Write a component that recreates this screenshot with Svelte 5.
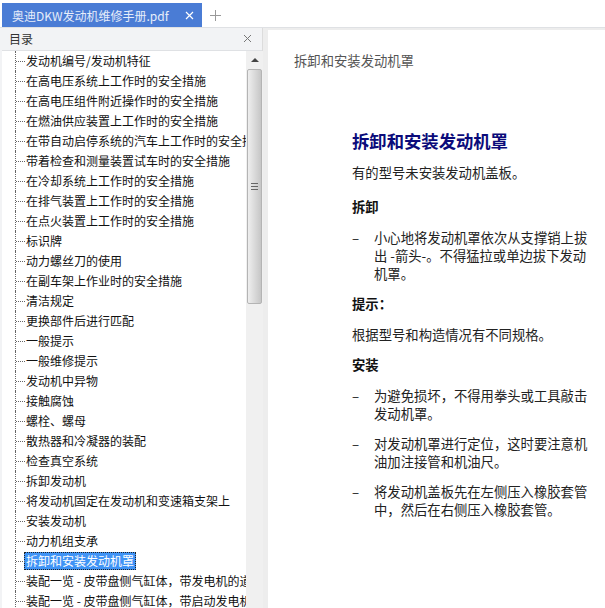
<script>
    const toc = [
        '发动机编号/发动机特征',
        '在高电压系统上工作时的安全措施',
        '在高电压组件附近操作时的安全措施',
        '在燃油供应装置上工作时的安全措施',
        '在带自动启停系统的汽车上工作时的安全措施',
        '带着检查和测量装置试车时的安全措施',
        '在冷却系统上工作时的安全措施',
        '在排气装置上工作时的安全措施',
        '在点火装置上工作时的安全措施',
        '标识牌',
        '动力螺丝刀的使用',
        '在副车架上作业时的安全措施',
        '清洁规定',
        '更换部件后进行匹配',
        '一般提示',
        '一般维修提示',
        '发动机中异物',
        '接触腐蚀',
        '螺栓、螺母',
        '散热器和冷凝器的装配',
        '检查真空系统',
        '拆卸发动机',
        '将发动机固定在发动机和变速箱支架上',
        '安装发动机',
        '动力机组支承',
        '拆卸和安装发动机罩',
        '装配一览 - 皮带盘侧气缸体，带发电机的道路车辆',
        '装配一览 - 皮带盘侧气缸体，带启动发电机'
    ];
    const selected = '拆卸和安装发动机罩';
</script>

<div class="app">
    <div class="tabbar">
        <div class="tab">
            <span class="tab-title">奥迪DKW发动机维修手册.pdf</span>
            <svg width="9" height="9" viewBox="0 0 9 9"><path d="M1 1l7 7M8 1L1 8" stroke="#fff" stroke-width="1.2" /></svg>
        </div>
        <svg class="plus" width="13" height="13" viewBox="0 0 13 13"><path d="M6.5 1v11M1 6.5h11" stroke="#999" stroke-width="1" /></svg>
    </div>
    <div class="main">
        <div class="sidebar">
            <div class="side-head">
                <span>目录</span>
                <svg width="9" height="9" viewBox="0 0 9 9"><path d="M1 1l7 7M8 1L1 8" stroke="#777" stroke-width="1" /></svg>
            </div>
            <div class="side-body">
                <div class="tree">
                    {#each toc as item}
                        <div class="row">
                            <span class="branch"></span>
                            <span class="label" class:sel={item === selected}>{item}</span>
                        </div>
                    {/each}
                </div>
                <div class="scrollbar">
                    <div class="arrow"><span></span></div>
                    <div class="thumb"><span class="grip"></span></div>
                </div>
            </div>
        </div>
        <div class="doc">
            <div class="running">拆卸和安装发动机罩</div>
            <div class="content">
                <h1>拆卸和安装发动机罩</h1>
                <p class="intro">有的型号未安装发动机盖板。</p>
                <h2>拆卸</h2>
                <div class="item first"><span>–</span><p>小心地将发动机罩依次从支撑销上拔出 -箭头-。不得猛拉或单边拔下发动机罩。</p></div>
                <h2 class="hint">提示：</h2>
                <p class="note">根据型号和构造情况有不同规格。</p>
                <h2 class="install">安装</h2>
                <div class="item first"><span>–</span><p>为避免损坏，不得用拳头或工具敲击发动机罩。</p></div>
                <div class="item"><span>–</span><p>对发动机罩进行定位，这时要注意机油加注接管和机油尺。</p></div>
                <div class="item"><span>–</span><p>将发动机盖板先在左侧压入橡胶套管中，然后在右侧压入橡胶套管。</p></div>
            </div>
        </div>
    </div>
</div>

<style>
    :global(body) {
        margin: 0;
        overflow: hidden;
    }

    .app {
        width: 605px;
        height: 608px;
        display: flex;
        flex-direction: column;
        overflow: hidden;
        background: #fff;
        font-family: "Noto Sans CJK SC", sans-serif;
    }

    .tabbar {
        height: 24px;
        margin-top: 3px;
        padding-left: 2px;
        display: flex;
        align-items: center;
        border-bottom: 1px solid #dfe1e4;
        flex: none;
    }

    .tab {
        width: 200px;
        height: 24px;
        box-sizing: border-box;
        padding: 0 8px 0 10px;
        background: #4a7cd5;
        color: #e6edfa;
        font-size: 12px;
        white-space: nowrap;
        display: flex;
        align-items: center;
        justify-content: space-between;
    }

    .plus {
        margin-left: 7px;
    }

    .main {
        flex: 1;
        display: flex;
        min-height: 0;
        background: #ededed;
    }

    .sidebar {
        width: 263px;
        flex: none;
        display: flex;
        flex-direction: column;
        padding-left: 2px;
        box-sizing: border-box;
        border-right: 1px solid #dcdcdc;
        background: #f2f3f5;
    }

    .side-head {
        height: 23px;
        flex: none;
        padding: 0 10px 2px 7px;
        box-sizing: border-box;
        display: flex;
        align-items: center;
        justify-content: space-between;
        font-size: 12px;
        color: #333;
        border-bottom: 1px solid #dfe1e4;
    }

    .side-body {
        flex: 1;
        display: flex;
        min-height: 0;
        background: #fff;
    }

    .tree {
        width: 244px;
        flex: none;
        overflow: hidden;
        font-size: 12px;
        color: #111;
    }

    .row {
        height: 20px;
        display: flex;
        align-items: center;
        white-space: nowrap;
        padding-left: 13px;
    }

    .branch {
        width: 10px;
        height: 20px;
        flex: none;
        position: relative;
        border-left: 1px dotted #666;
        box-sizing: border-box;
    }

    .branch::after {
        content: "";
        position: absolute;
        left: 0;
        right: 0;
        top: 10px;
        border-top: 1px dotted #666;
    }

    .label {
        padding: 0 1px;
        line-height: 18px;
    }

    .label.sel {
        background: #3f93f5;
        color: #fff;
        outline: 1px dotted #222;
        outline-offset: -1px;
        padding: 0 2px;
        margin-left: -1px;
    }

    .scrollbar {
        width: 17px;
        flex: none;
        background: #f0f0f0;
        display: flex;
        flex-direction: column;
    }

    .arrow {
        height: 18px;
        flex: none;
        display: flex;
        align-items: center;
        justify-content: center;
    }

    .arrow span {
        width: 0;
        height: 0;
        border-left: 4px solid transparent;
        border-right: 4px solid transparent;
        border-bottom: 4px solid #444;
    }

    .thumb {
        height: 235px;
        flex: none;
        margin-left: 1px;
        box-sizing: border-box;
        width: 15px;
        border: 1px solid #b4b4b4;
        border-radius: 2px;
        background: linear-gradient(to right, #eee, #dcdcdc 45%, #c6c6c6);
        display: flex;
        align-items: center;
        justify-content: center;
    }

    .grip {
        width: 7px;
        height: 7px;
        background: repeating-linear-gradient(to bottom, #666 0 1px, transparent 1px 3px);
    }

    .doc {
        flex: 1;
        margin: 2px 0 0 5px;
        background: #fff;
        min-width: 0;
        overflow: hidden;
    }

    .running {
        padding: 23px 0 0 26px;
        font-family: "Liberation Serif", "Noto Sans CJK SC", serif;
        font-size: 13.33px;
        line-height: 18px;
        color: #555;
    }

    .content {
        padding: 58px 17px 0 84px;
        font-size: 13.33px;
        line-height: 18px;
        color: #222;
    }

    h1 {
        margin: 0;
        font-size: 17.33px;
        line-height: 24px;
        color: #0b0b7a;
        font-weight: 700;
    }

    h2 {
        margin: 16px 0 0;
        font-size: 13.33px;
        line-height: 18px;
        font-weight: 700;
        color: #111;
    }

    p {
        margin: 0;
    }

    .intro {
        margin-top: 11px;
    }

    .item {
        display: flex;
        margin-top: 12px;
    }

    .item.first {
        margin-top: 13px;
    }

    .item span {
        width: 22px;
        flex: none;
    }

    h2.hint {
        margin-top: 12px;
    }

    h2.install {
        margin-top: 12px;
    }

    .note {
        margin-top: 13px;
    }
</style>
